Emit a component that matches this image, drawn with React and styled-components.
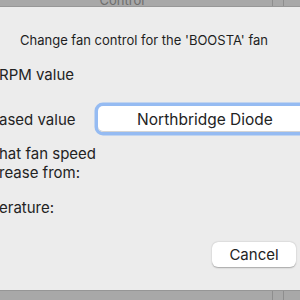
import React from 'react';
import styled, { createGlobalStyle } from 'styled-components';

const GlobalStyle = createGlobalStyle`
  html, body {
    margin: 0;
    padding: 0;
    width: 300px;
    height: 300px;
    overflow: hidden;
    background: #ececec;
  }
  body {
    font-family: Inter, "Liberation Sans", sans-serif;
    color: #222222;
  }
`;

const Screen = styled.div`
  display: flex;
  flex-direction: column;
  width: 300px;
  height: 300px;
  overflow: hidden;
`;

const Strip = styled.div`
  display: flex;
  height: ${(p) => p.$h}px;
  flex-shrink: 0;
  background: #a8a8a8;
  border-top: ${(p) => (p.$bottom ? '1px solid #969696' : '0')};
  border-bottom: ${(p) => (p.$bottom ? '0' : '1px solid #979797')};
  overflow: hidden;
`;

const StripTitle = styled.div`
  flex: 1;
  display: flex;
  align-items: flex-end;
  justify-content: center;
  padding-right: 28px;
  font-size: 13px;
  line-height: 13px;
  color: #6e6e6e;
  margin-bottom: -1px;
`;

const StripCell = styled.div`
  width: ${(p) => p.$w}px;
  border-left: 1px solid #8e8e8e;
`;

const Body = styled.div`
  flex: 1;
  display: flex;
  flex-direction: column;
`;

const Heading = styled.div`
  margin-top: 25px;
  padding-left: 20px;
  font-size: 13px;
  line-height: 16px;
  color: #1e1e1e;
  white-space: nowrap;
`;

const Form = styled.div`
  display: grid;
  grid-template-columns: 98px 1fr;
  margin-top: 17px;
`;

const Label = styled.div`
  grid-column: 1 / ${(p) => (p.$wide ? 3 : 2)};
  font-size: 15px;
  line-height: 19px;
  color: #232323;
  white-space: nowrap;
  margin-left: -1px;
  margin-top: ${(p) => p.$gap || 0}px;
  align-self: center;
`;

const Field = styled.div`
  grid-column: 2;
  margin-top: ${(p) => p.$gap || 0}px;
  width: 214px;
  height: 26px;
  display: flex;
  align-items: center;
  justify-content: center;
  background: #ffffff;
  border-radius: 5px;
  box-shadow: 0 0 0 3.5px #95bbf2, inset 0 -1px 0 #d4d4d4;
  font-size: 15.5px;
  color: #232323;
  align-self: center;
`;

const Actions = styled.div`
  display: flex;
  justify-content: flex-end;
  padding-right: 4px;
  margin-top: 25px;
`;

const Button = styled.button`
  width: 84px;
  height: 25px;
  border: 0;
  border-radius: 6px;
  background: #ffffff;
  box-shadow: 0 0.5px 1.5px rgba(0, 0, 0, 0.3);
  font-family: inherit;
  font-size: 15px;
  color: #232323;
  padding: 0;
`;

export default function App() {
  return (
    <Screen>
      <GlobalStyle />
      <Strip $h={6}>
        <StripTitle>Control</StripTitle>
        <StripCell $w={10} />
        <StripCell $w={16} />
      </Strip>
      <Body>
        <Heading>Change fan control for the 'BOOSTA' fan</Heading>
        <Form>
          <Label $wide>RPM value</Label>
          <Label $gap={22}>ased value</Label>
          <Field $gap={22}>Northbridge Diode</Field>
          <Label $wide $gap={12}>
            hat fan speed
            <br />
            rease from:
          </Label>
          <Label $wide $gap={16}>erature:</Label>
        </Form>
        <Actions>
          <Button>Cancel</Button>
        </Actions>
      </Body>
      <Strip $h={9} $bottom>
        <StripTitle />
        <StripCell $w={10} />
        <StripCell $w={16} />
      </Strip>
    </Screen>
  );
}
